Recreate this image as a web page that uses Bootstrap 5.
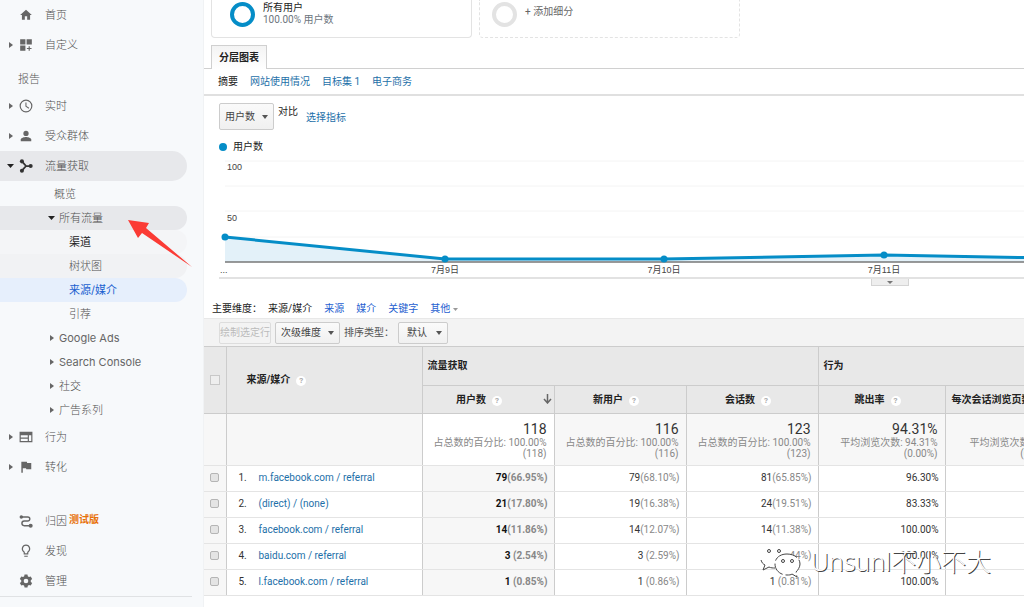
<!DOCTYPE html>
<html lang="zh-CN">
<head>
<meta charset="utf-8">
<meta name="viewport" content="width=device-width, initial-scale=1">
<title>来源/媒介</title>
<link href="https://cdn.jsdelivr.net/npm/bootstrap@5.3.0/dist/css/bootstrap.min.css" rel="stylesheet">
<style>
body{font:10px/14px Roboto,"Noto Sans CJK SC",sans-serif;color:#222;background:#fff}
a{color:#1d6fa8;text-decoration:none}
/* sidebar */
.side{width:204px;background:#f7f9fb;border-right:1px solid #f0f2f4;font:300 11px/16px Inter,"Noto Sans CJK SC",sans-serif}
.side a{color:#505050;display:flex;align-items:center;height:30px;width:187px;border-radius:0 15px 15px 0}
.side .on{background:#e7e8eb}
.side svg{width:14px;height:14px;fill:#666;margin-right:12px}
.side a::before{content:"";width:19px;flex:none}
.side .exp::before{background:#666;height:6px;width:4px;margin:0 6px 0 9px;clip-path:polygon(0 0,100% 50%,0 100%)}
.side .open::before{background:#222;height:4px;width:7px;margin:0 5px 0 7px;clip-path:polygon(0 0,100% 0,50% 100%)}
.side .open svg{fill:#333}
.side-title{padding:11px 0 4px 18px;color:#555}
.side .sub1{padding-top:1px}
.side .sub1 a,.side .sub2 a{height:24px}
.side .sub1 a::before{width:54px}
.side .sub1 .exp::before{width:4px;margin:0 5px 0 50px}
.side .sub1 .open::before{width:7px;margin:0 4px 0 48px}
.side .sub2 a::before{width:69px}
.side .exp.latin{font-weight:400;color:#666}
.side .sub2 .near{color:#222;background:#f4f5f7;font-weight:400}
.side .sub2 .faded{background:#f1f2f4}
.side .sub2 .sel{background:#e6effc;color:#1a5fd0;font-weight:400}
.side .beta{color:#e8710a;font-size:10px;font-weight:700;line-height:14px;margin:-4px 0 0 2px}
.foot-line{width:192px;border-top:1px solid #e0e2e4}
.arrow{position:absolute;left:128px;top:220px;width:64px;height:47px}
/* segments */
.report{min-width:0}
.segs{gap:7px;padding:0 0 7px 7px}
.seg{width:261px;height:38px;border:1px solid #e3e3e3;border-top:0;border-radius:0 0 4px 4px;padding:2px 0 0 18px;line-height:12px}
.seg.add{border-style:dashed;padding-left:12px;color:#666}
.add-label{padding-top:4px}
.ring{width:25px;height:25px;border:4px solid #058dc7;border-radius:50%}
.add .ring{border-color:#e3e3e3}
/* tabs */
.tabline{border-bottom:1px solid #d0d0d0;height:24px;padding-left:7px}
.tabline button{border:1px solid #d0d0d0;border-bottom:0;background:linear-gradient(#f3f3f3,#fff);height:24px;padding:0 7px;font-weight:700;color:#222}
.subtabs{height:27px;padding-left:14px;gap:12px;border-bottom:2px solid #e0e0e0}
.pick,.act{border:1px solid #ccc;border-radius:2px;background:linear-gradient(#fafafa,#f0f0f0);height:22px;padding:0 5px;color:#444;line-height:14px}
.pick{appearance:none;background:url("data:image/svg+xml,%3Csvg xmlns='http://www.w3.org/2000/svg' width='6' height='4'%3E%3Cpath d='M0 0h6L3 4z' fill='%23555'/%3E%3C/svg%3E") no-repeat right 5px center,linear-gradient(#fafafa,#f0f0f0)}
.metric{height:27px;width:55px}
.second{width:65px}
.sorting{width:50px;padding-left:8px}
.metrics{padding:7px 0 0 15px}
.versus{padding:2px 8px 0 4px}
.legend-row{padding:10px 0 6px 15px;gap:6px}
.legend-dot{width:8px;height:8px;border-radius:50%;background:#058dc7}
.chart-box{padding-left:15px}
.chart{height:117px;width:100%;display:block}
.chart text{font:9px/12px "Liberation Sans","Noto Sans CJK SC",sans-serif;fill:#444}
.scrub{border-top:2px solid #e2e2e2;height:25px}
.handle{position:absolute;top:0;left:652px;width:38px;height:7px;border:1px solid #d4d4d4;border-top:0;background:#eee;padding:0}
.handle svg{display:block;margin:1px auto}
/* table */
.dims{padding:0 0 2px 8px;gap:12px}
.dims a{color:#1f5fd0}
.dims-label{margin-right:-6px}
.tools{height:28px;background:#f3f3f3;border-top:1px solid #e8e8e8;padding-left:15px;gap:4px;color:#555}
.tools .act{width:52px;padding:0;color:#bbb;background:#f3f3f3;border-color:#ddd;white-space:nowrap}
.data{table-layout:fixed;width:100%;min-width:858px;border-collapse:collapse;white-space:nowrap}
.c-check{width:22px}.c-dim{width:196px}.c-num{width:132px}.c-rate{width:127px}
.data th,.data td{border-right:1px solid #ccc;padding:0 6px;text-align:right}
.data th:first-child,.data td:first-child{text-align:center;padding:0}
.data thead{background:#e8e8e8}
.data thead th{border:1px solid #ccc;border-left:0;text-align:left}
.data thead th.dim-head{padding-left:20px}
.data thead th.num{text-align:center;position:relative;padding-right:14px}
.data thead th.sorted{padding-right:18px}
.data .g{height:39px;padding-left:5px}
.data .h{height:28px}
.data .sum td{height:52px;vertical-align:top;background:#f7f7f7;color:#888;line-height:11px;border-bottom:1px solid #e4e4e4;padding:7px 7px 0}
.data .sum td.hot{background:#fff}
.data .sum b{display:block;font:400 14px/16px Roboto,sans-serif;color:#333}
.data .row-d td{height:26px;border-bottom:1px solid #e4e4e4;color:#333;font-weight:400;padding-bottom:2px}
.data .row-d td:first-child,.data .row-d td.hot{background:#f7f7f7}
.data .row-d td.hot{font-weight:700;color:#111}
.data .row-d i{font-style:normal;color:#888}
.data .row-d td.dim{text-align:left;padding-left:12px}
.dim span{display:inline-block;width:20px}
.q{display:inline-block;width:10px;height:10px;border-radius:50%;background:#fff;color:#aaa;font:700 8px/10px Roboto,sans-serif;text-align:center;margin-left:6px;vertical-align:0}
.data input{appearance:none;display:block;margin:0 0 0 6px;width:9px;height:9px;border:1px solid #b5b5b5;border-radius:2px;background:#e4e4e4}
.data thead input{width:10px;height:10px;border-color:#c8c8c8;border-radius:0;background:#eee}
.sort{position:absolute;right:2px;top:8px}
.wm{position:absolute;right:33px;bottom:17px;gap:10px;color:#fff;font:300 25px/36px "Noto Sans","Noto Sans CJK SC",sans-serif;text-shadow:1px 1px 0 #444;white-space:nowrap;pointer-events:none}
</style>
</head>
<body>
<div class="d-flex min-vh-100 position-relative overflow-hidden">
<nav class="side flex-shrink-0">
  <a href="#"><svg viewBox="0 0 24 24"><path d="M10 20v-6h4v6h5v-8h3L12 3 2 12h3v8z"/></svg>首页</a>
  <a href="#" class="exp"><svg viewBox="0 0 24 24"><path d="M2 2h9v9H2zM13 2h9v9h-9zM2 13h9v9H2zM16.500 14h2v3h3v2h-3v3h-2v-3h-3v-2h3z"/></svg>自定义</a>
  <div class="side-title">报告</div>
  <a href="#" class="exp"><svg viewBox="0 0 24 24"><path fill-rule="evenodd" d="M12 1a11 11 0 1 0 0 22 11 11 0 0 0 0-22zm0 2a9 9 0 1 1 0 18 9 9 0 0 1 0-18z"/><path d="M11 6v7l5.500 3.500 1-1.500-4.700-3V6z"/></svg>实时</a>
  <a href="#" class="exp"><svg viewBox="0 0 24 24"><circle cx="12" cy="7.500" r="4.500"/><path d="M3 21v-3c0-3 6-4.500 9-4.500s9 1.500 9 4.500v3z"/></svg>受众群体</a>
  <a href="#" class="open on"><svg viewBox="0 0 24 24"><circle cx="5" cy="4" r="3.500"/><circle cx="5" cy="20" r="3.500"/><circle cx="20" cy="12" r="3.500"/><path d="M5 4l7 8-7 8M12 12h8" fill="none" stroke="#333" stroke-width="3"/></svg>流量获取</a>
  <div class="sub1">
    <a href="#">概览</a>
    <a href="#" class="open on">所有流量</a>
    <div class="sub2">
      <a href="#" class="near">渠道</a>
      <a href="#" class="faded">树状图</a>
      <a href="#" class="sel">来源/媒介</a>
      <a href="#">引荐</a>
    </div>
    <a href="#" class="exp latin">Google Ads</a>
    <a href="#" class="exp latin">Search Console</a>
    <a href="#" class="exp">社交</a>
    <a href="#" class="exp">广告系列</a>
  </div>
  <a href="#" class="exp"><svg viewBox="0 0 24 24"><path fill-rule="evenodd" d="M1 3h22v18H1zM3 9v4h12V9zM3 15v4h12v-4zM17 9v10h4V9z"/></svg>行为</a>
  <a href="#" class="exp mb-4"><svg viewBox="0 0 24 24"><path d="M14 5l-.5-2H4v19h2.500v-8H12l.5 2H21V5z"/></svg>转化</a>
  <a href="#"><svg viewBox="0 0 24 24"><circle cx="4" cy="5" r="3"/><circle cx="20" cy="20" r="3.500"/><path d="M4 5h11a3.500 3.500 0 0 1 0 7H9a4 4 0 0 0 0 8h11" fill="none" stroke="#666" stroke-width="2.500"/></svg>归因<span class="beta">测试版</span></a>
  <a href="#"><svg viewBox="0 0 24 24"><path d="M9 17v-3c-6-4-3-12 3-12s9 8 3 12v3zM9 21h6" fill="none" stroke="#666" stroke-width="2"/></svg>发现</a>
  <a href="#"><svg viewBox="0 0 24 24"><path fill-rule="evenodd" d="M9.500 1h5l.6 3 2 1.200 3-1 2.500 4.300-2.400 2v3l2.400 2-2.500 4.300-3-1-2 1.200-.6 3h-5l-.6-3-2-1.200-3 1-2.500-4.300 2.400-2v-3l-2.400-2 2.500-4.300 3 1 2-1.200zM12 8a4 4 0 1 0 0 8 4 4 0 0 0 0-8z"/></svg>管理</a>
  <div class="foot-line"></div>
</nav>
<svg class="arrow" viewBox="0 0 64 47" aria-hidden="true"><path d="M0 0L21 3 18 8 64 47 14 13 10 18z" fill="#fb3b35"/></svg>

<main class="report flex-grow-1 overflow-hidden">
  <div class="segs d-flex">
    <div class="seg d-flex gap-2"><span class="ring"></span><div><div>所有用户</div><div class="text-secondary">100.00% 用户数</div></div></div>
    <div class="seg add d-flex gap-2"><span class="ring"></span><div class="add-label">+ 添加细分</div></div>
  </div>
  <div class="tabline"><button type="button">分层图表</button></div>
  <div class="subtabs d-flex align-items-center"><span>摘要</span><a href="#">网站使用情况</a><a href="#">目标集 1</a><a href="#">电子商务</a></div>

  <div class="metrics d-flex">
    <select class="pick metric" aria-label="指标"><option>用户数</option></select>
    <span class="versus">对比</span><a href="#" class="pt-2">选择指标</a>
  </div>
  <div class="legend-row d-flex align-items-center"><span class="legend-dot"></span>用户数</div>
  <div class="chart-box">
    <svg class="chart" role="img" aria-label="用户数">
      <path d="M6 1h2000M6 26h2000M6 51h2000M6 77h2000" stroke="#f4f4f4"/>
      <path d="M6 77L226 99H445L665 95 885 99V102H6z" fill="#e3f1f9"/>
      <path d="M6 102h2000" stroke="#777" stroke-width="1.500"/>
      <path d="M6 77L226 99H445L665 95 885 99" fill="none" stroke="#058dc7" stroke-width="3"/>
      <g fill="#058dc7"><circle cx="6" cy="77" r="3.500"/><circle cx="226" cy="99" r="3.500"/><circle cx="445" cy="99" r="3.500"/><circle cx="665" cy="95" r="3.500"/></g>
      <text x="8" y="10">100</text><text x="8" y="61">50</text><text x="1" y="113">...</text>
      <g text-anchor="middle"><text x="226" y="113">7月9日</text><text x="445" y="113">7月10日</text><text x="665" y="113">7月11日</text></g>
    </svg>
    <div class="scrub position-relative"><button type="button" class="handle" aria-label="展开"><svg width="6" height="3"><path d="M0 0h6L3 3z" fill="#777"/></svg></button></div>
  </div>

  <div class="dims d-flex"><span class="dims-label">主要维度：</span><span>来源/媒介</span><a href="#">来源</a><a href="#">媒介</a><a href="#">关键字</a><a href="#">其他 <svg width="5" height="3"><path d="M0 0h5L2.500 3z" fill="#999"/></svg></a></div>
  <div class="tools d-flex align-items-center">
    <button class="act" type="button" disabled>绘制选定行</button>
    <select class="pick second" aria-label="次级维度"><option>次级维度</option></select>
    <label for="sorttype">排序类型：</label>
    <select class="pick sorting" id="sorttype"><option>默认</option></select>
  </div>
  <div class="position-relative">
  <table class="data">
    <colgroup><col class="c-check"><col class="c-dim"><col class="c-num"><col class="c-num"><col class="c-num"><col class="c-rate"><col></colgroup>
    <thead>
      <tr><th rowspan="2"><input type="checkbox" aria-label="全选"></th><th rowspan="2" class="dim-head">来源/媒介<span class="q">?</span></th><th colspan="3" class="g">流量获取</th><th colspan="2" class="g">行为</th></tr>
      <tr><th class="num sorted h">用户数<span class="q">?</span><svg class="sort" width="9" height="10"><path d="M4.500 0v9M1 5l3.500 4L8 5" fill="none" stroke="#666" stroke-width="1.500"/></svg></th><th class="num">新用户<span class="q">?</span></th><th class="num">会话数<span class="q">?</span></th><th class="num">跳出率<span class="q">?</span></th><th>每次会话浏览页数<span class="q">?</span></th></tr>
    </thead>
    <tbody>
      <tr class="sum"><td></td><td></td><td class="hot"><b>118</b>占总数的百分比: 100.00%<br>(118)</td><td><b>116</b>占总数的百分比: 100.00%<br>(116)</td><td><b>123</b>占总数的百分比: 100.00%<br>(123)</td><td><b>94.31%</b>平均浏览次数: 94.31%<br>(0.00%)</td><td><b>1.08</b>平均浏览次数: 1.08<br>(0.00%)</td></tr>
      <tr class="row-d"><td><input type="checkbox" aria-label="1"></td><td class="dim"><span>1.</span><a href="#">m.facebook.com / referral</a></td><td class="hot">79<i>(66.95%)</i></td><td>79<i>(68.10%)</i></td><td>81<i>(65.85%)</i></td><td>96.30%</td><td></td></tr>
      <tr class="row-d"><td><input type="checkbox" aria-label="2"></td><td class="dim"><span>2.</span><a href="#">(direct) / (none)</a></td><td class="hot">21<i>(17.80%)</i></td><td>19<i>(16.38%)</i></td><td>24<i>(19.51%)</i></td><td>83.33%</td><td></td></tr>
      <tr class="row-d"><td><input type="checkbox" aria-label="3"></td><td class="dim"><span>3.</span><a href="#">facebook.com / referral</a></td><td class="hot">14<i>(11.86%)</i></td><td>14<i>(12.07%)</i></td><td>14<i>(11.38%)</i></td><td>100.00%</td><td></td></tr>
      <tr class="row-d"><td><input type="checkbox" aria-label="4"></td><td class="dim"><span>4.</span><a href="#">baidu.com / referral</a></td><td class="hot">3 <i>(2.54%)</i></td><td>3 <i>(2.59%)</i></td><td>3 <i>(2.44%)</i></td><td>100.00%</td><td></td></tr>
      <tr class="row-d"><td><input type="checkbox" aria-label="5"></td><td class="dim"><span>5.</span><a href="#">l.facebook.com / referral</a></td><td class="hot">1 <i>(0.85%)</i></td><td>1 <i>(0.86%)</i></td><td>1 <i>(0.81%)</i></td><td>100.00%</td><td></td></tr>
    </tbody>
  </table>
  <div class="wm d-flex align-items-center"><svg width="42" height="36" fill="#fff" stroke="#444"><ellipse cx="15" cy="13" rx="14" ry="12" stroke="none"/><path d="M2 17c1 3 2 4 4 5l-2 5 6-3c2 1 4 1 6 1"/><path d="M28 11c-7 0-12 4-12 10s5 11 12 11c2 0 4 0 5-1l5 3-1-5c2-2 4-5 4-8 0-6-6-10-13-10z" stroke-dasharray="14 3"/><circle cx="10" cy="8" r="1.500"/><circle cx="20" cy="8" r="1.500"/><circle cx="24" cy="18" r="1.500"/><circle cx="33" cy="18" r="1.500"/></svg><span>Unsunl不小不大</span></div>
  </div>
</main>
</div>
<script src="https://cdn.jsdelivr.net/npm/bootstrap@5.3.0/dist/js/bootstrap.bundle.min.js"></script>
</body>
</html>
